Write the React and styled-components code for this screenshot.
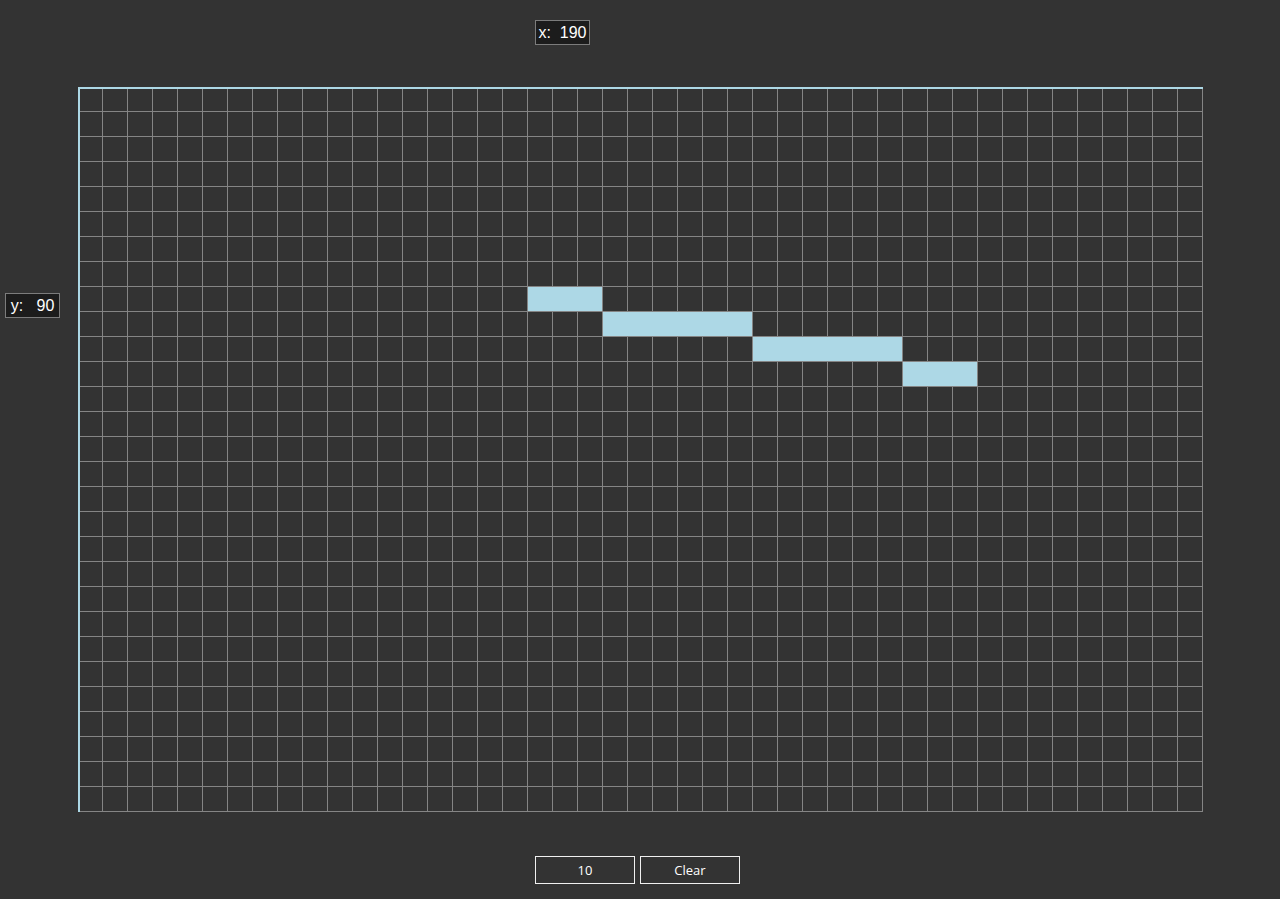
import React, { useState } from "react";
import styled, { createGlobalStyle } from "styled-components";

// piano-roll style grid: 45 steps x 29 rows, 25px per cell
const COLS = 45;
const ROWS = 29;
const CELL = 25;

const initialNotes = [
  { row: 8, col: 18, len: 3 },
  { row: 9, col: 21, len: 6 },
  { row: 10, col: 27, len: 6 },
  { row: 11, col: 33, len: 3 },
];

const GlobalStyle = createGlobalStyle`
  html, body {
    margin: 0;
    padding: 0;
    background: #333333;
  }
  body {
    font-family: "Liberation Sans", Arial, sans-serif;
    color: #fff;
  }
`;

const App = () => {
  const [notes, setNotes] = useState(initialNotes);
  const [step, setStep] = useState("10");

  return (
    <StyledPage>
      <GlobalStyle />
      <StyledTop>
        <Readout>x:&nbsp; 190</Readout>
      </StyledTop>
      <StyledMiddle>
        <StyledSide>
          <Readout>y:&nbsp;&nbsp; 90</Readout>
        </StyledSide>
        <Roll>
          {notes.map((n, i) => (
            <Note key={i} $row={n.row} $col={n.col} $len={n.len} />
          ))}
        </Roll>
      </StyledMiddle>
      <StyledControls>
        <StepInput value={step} onChange={(e) => setStep(e.target.value)} />
        <StyledButton onClick={() => setNotes([])}>Clear</StyledButton>
      </StyledControls>
    </StyledPage>
  );
};

const StyledPage = styled.div`
  width: 1280px;
  height: 899px;
  background: #333333;
  overflow: hidden;
`;

const StyledTop = styled.div`
  height: 87px;
  box-sizing: border-box;
  padding: 20px 0 0 535px;
`;

const Readout = styled.div`
  display: inline-block;
  box-sizing: border-box;
  width: 55px;
  height: 25px;
  padding: 0;
  text-align: center;
  line-height: 23px;
  font-size: 16px;
  color: #ffffff;
  background: #1c1c1c;
  border: 1px solid #7c7c7c;
  white-space: pre;
`;

const StyledMiddle = styled.div`
  display: flex;
`;

const StyledSide = styled.div`
  width: 78px;
  box-sizing: border-box;
  padding: 206px 0 0 5px;
`;

const Roll = styled.div`
  position: relative;
  display: grid;
  grid-template-columns: repeat(${COLS}, ${CELL}px);
  grid-template-rows: repeat(${ROWS}, ${CELL}px);
  background-image:
    linear-gradient(to right, transparent ${CELL - 1}px, #858585 ${CELL - 1}px),
    linear-gradient(to bottom, transparent ${CELL - 1}px, #858585 ${CELL - 1}px);
  background-size: ${CELL}px ${CELL}px;

  &::before {
    content: "";
    position: absolute;
    inset: 0;
    border-left: 2px solid #add8e6;
    border-top: 2px solid #add8e6;
    pointer-events: none;
    z-index: 2;
  }
`;

const Note = styled.div`
  grid-row: ${(p) => p.$row + 1};
  grid-column: ${(p) => p.$col + 1} / span ${(p) => p.$len};
  width: calc(100% - 1px);
  height: calc(100% - 1px);
  background: #add8e6;
`;

const StyledControls = styled.div`
  display: flex;
  gap: 5px;
  padding: 44px 0 0 535px;
`;

const StepInput = styled.input`
  box-sizing: border-box;
  width: 100px;
  height: 28px;
  padding: 0;
  border: 1px solid #f0f0f0;
  background: transparent;
  color: #fff;
  text-align: center;
  font-family: "Open Sans", sans-serif;
  font-size: 13px;
  outline: none;
`;

const StyledButton = styled.button`
  box-sizing: border-box;
  width: 100px;
  height: 28px;
  padding: 0;
  border: 1px solid #f0f0f0;
  background: transparent;
  color: #fff;
  font-family: "Open Sans", sans-serif;
  font-size: 13px;
  cursor: pointer;
`;

export default App;
